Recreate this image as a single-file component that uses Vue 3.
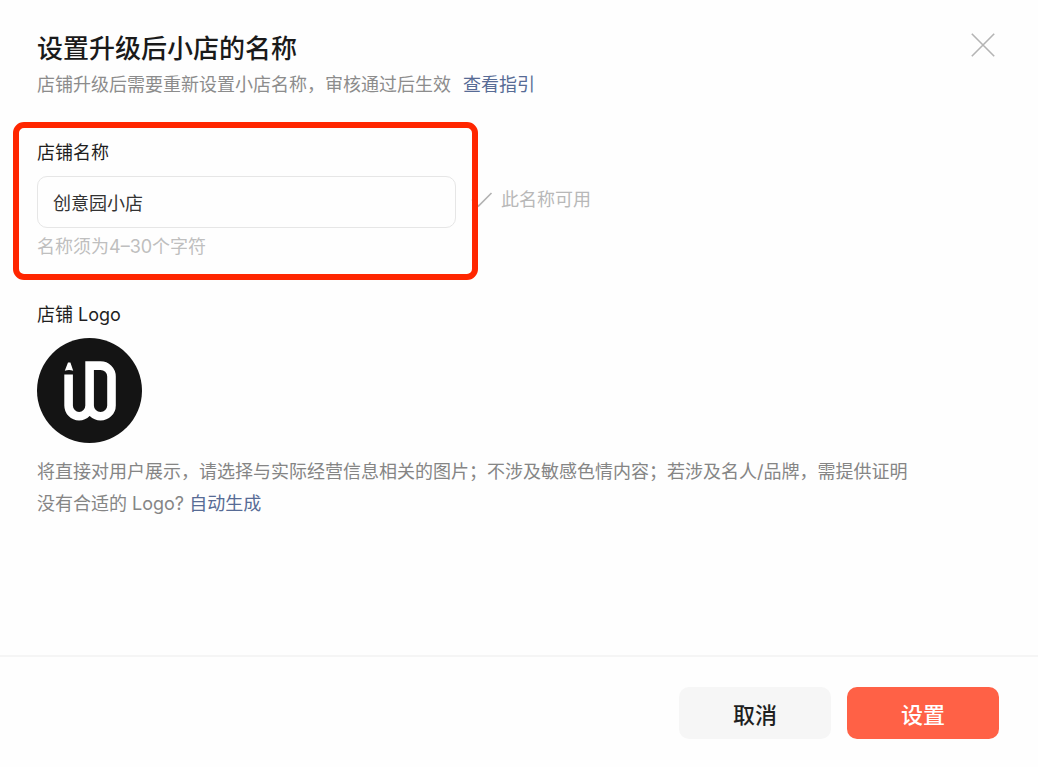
<script setup>
import { ref } from 'vue'

const shopName = ref('创意园小店')
</script>

<template>
  <main class="dialog" role="dialog" aria-labelledby="dialog-title">
    <header class="head">
      <div>
        <h1 id="dialog-title" class="title">设置升级后小店的名称</h1>
        <p class="subtitle">店铺升级后需要重新设置小店名称，审核通过后生效<a class="link guide" href="#guide">查看指引</a></p>
      </div>
      <button class="close" type="button" aria-label="关闭">
        <svg width="24" height="24" viewBox="0 0 24 24" fill="none" stroke="#b4b4b4" stroke-width="1.6">
          <path d="M0.8 0.8 23.2 23.2M23.2 0.8 0.8 23.2" />
        </svg>
      </button>
    </header>

    <section class="body">
      <div class="field">
        <div class="name-group">
          <label class="label" for="shop-name">店铺名称</label>
          <input id="shop-name" v-model="shopName" class="input" type="text" />
          <p class="hint">名称须为4–30个字符</p>
          <span class="highlight"></span>
        </div>
        <div class="status">
          <svg class="check" width="22" height="16" viewBox="0 0 22 16" fill="none" stroke="#b2b2b2" stroke-width="1.6">
            <path d="M1 7.5 7.5 14 20.5 1" />
          </svg>
          <span>此名称可用</span>
        </div>
      </div>

      <div class="logo-group">
        <h2 class="label">店铺 Logo</h2>
        <svg class="logo" width="105" height="105" viewBox="0 0 105 105" role="img" aria-label="店铺 Logo">
          <circle cx="52.5" cy="52.5" r="52.5" fill="#141414" />
          <g fill="none" stroke="#fff" stroke-width="8.6">
            <path d="M31.6 36.5V67.4a10.5 10.8 0 0 0 21 0V27.6H63.5a11 11 0 0 1 11 11V67.4a10.95 10.8 0 0 1-21.9 0" />
          </g>
          <path d="M31 24.5h2.4L36.2 32.8Q32 31.4 27.8 32.8Z" fill="#fff" />
        </svg>
        <p class="note">将直接对用户展示，请选择与实际经营信息相关的图片；不涉及敏感色情内容；若涉及名人/品牌，需提供证明</p>
        <p class="note">没有合适的 Logo? <a class="link" href="#generate">自动生成</a></p>
      </div>
    </section>

    <footer class="foot">
      <button class="btn" type="button">取消</button>
      <button class="btn primary" type="button">设置</button>
    </footer>
  </main>
</template>

<style>
html {
  background: #fff;
}

body {
  margin: 0;
}
</style>

<style scoped>
.dialog {
  display: flex;
  flex-direction: column;
  box-sizing: border-box;
  min-height: 100vh;
  background: #fefefe;
  color: #1f1f1f;
  font-family: Inter, "Noto Sans CJK SC", sans-serif;
  font-size: 18px;
  line-height: 32px;
}

h1,
h2,
p {
  margin: 0;
}

.head {
  display: flex;
  justify-content: space-between;
  align-items: flex-start;
  padding: 33px 43px 0 37px;
}

.title {
  font-size: 26px;
  font-weight: 500;
  line-height: 32px;
  color: #1a1a1a;
}

.subtitle {
  margin-top: 4px;
  color: #8c8c8c;
}

.link {
  color: #576b95;
  text-decoration: none;
}

.guide {
  margin-left: 12px;
}

.close {
  display: flex;
  padding: 0;
  border: 0;
  background: none;
  cursor: pointer;
}

.body {
  flex: 1;
  padding: 36px 37px 24px;
}

.field {
  display: flex;
  align-items: center;
  gap: 15px;
}

.name-group {
  position: relative;
  display: flex;
  flex-direction: column;
  flex: 0 1 419px;
  min-width: 0;
}

.label {
  display: block;
  font-size: 18px;
  font-weight: 400;
  line-height: 32px;
}

.input {
  box-sizing: border-box;
  width: 100%;
  height: 52px;
  margin-top: 7px;
  padding: 0 15px;
  border: 1px solid #e6e6e6;
  border-radius: 10px;
  outline: none;
  background: #fefefe;
  color: #333;
  font: inherit;
}

.hint {
  margin-top: 3px;
  color: #bfbfbf;
}

.highlight {
  position: absolute;
  inset: -15px -22px -17px -24px;
  border: 6px solid #ff2600;
  border-radius: 11px;
  pointer-events: none;
}

.status {
  display: flex;
  align-items: center;
  gap: 8px;
  color: #b8b8b8;
}

.check {
  flex: none;
}

.logo-group {
  margin-top: 36px;
}

.logo {
  display: block;
  margin: 7px 0 13px;
}

.note {
  color: #858585;
}

.foot {
  display: flex;
  justify-content: flex-end;
  gap: 16px;
  padding: 30px 39px 28px;
  border-top: 2px solid #f5f5f5;
}

.btn {
  width: 152px;
  height: 52px;
  padding: 0;
  border: 0;
  border-radius: 10px;
  background: #f6f6f6;
  color: #1f1f1f;
  font-family: inherit;
  font-size: 22px;
  font-weight: 500;
  cursor: pointer;
}

.primary {
  background: #ff6146;
  color: #fff;
}
</style>
